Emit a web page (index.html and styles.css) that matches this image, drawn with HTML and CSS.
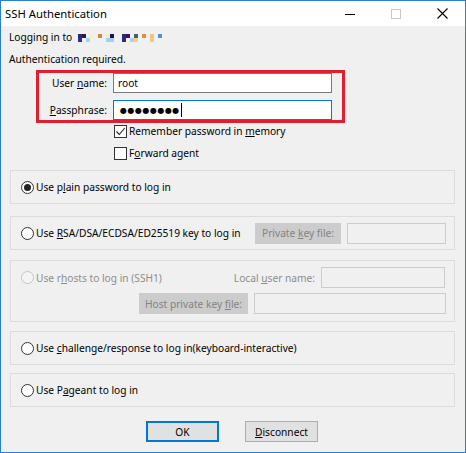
FILE: index.html
```html
<!DOCTYPE html>
<html>
<head>
<meta charset="utf-8">
<link rel="stylesheet" href="styles.css">
</head>
<body>
<div class="window">
  <div class="titlebar">
    <span class="title">SSH Authentication</span>
    <div class="caption">
      <span class="cap"><svg width="10" height="10" viewBox="0 0 10 10"><line x1="0" y1="5.5" x2="10" y2="5.5" stroke="#000" stroke-width="1"/></svg></span>
      <span class="cap"><svg width="10" height="10" viewBox="0 0 10 10"><rect x="0.5" y="0.5" width="9" height="9" fill="none" stroke="#c8c8c8" stroke-width="1"/></svg></span>
      <span class="cap"><svg width="11" height="11" viewBox="0 0 11 11"><path d="M0.5 0.5 L10.5 10.5 M10.5 0.5 L0.5 10.5" stroke="#000" stroke-width="1.1" fill="none"/></svg></span>
    </div>
  </div>
  <div class="content">
    <div class="line"><span>Logging in to</span>
      <svg class="host" width="84" height="8" viewBox="0 0 84 8" shape-rendering="crispEdges">
        <rect x="0" y="0" width="4" height="4" fill="#2b2b6f"/>
        <rect x="4" y="0" width="4" height="4" fill="#3a1150"/>
        <rect x="12" y="0" width="4" height="4" fill="#f4efcf"/>
        <rect x="20" y="0" width="4" height="4" fill="#d38a3b"/>
        <rect x="28" y="0" width="4" height="4" fill="#f2ecc8"/>
        <rect x="32" y="0" width="4" height="4" fill="#1b1452"/>
        <rect x="44" y="0" width="4" height="4" fill="#2c2a78"/>
        <rect x="48" y="0" width="4" height="4" fill="#3d1361"/>
        <rect x="56" y="0" width="4" height="4" fill="#3f6272"/>
        <rect x="64" y="0" width="4" height="4" fill="#d6903f"/>
        <rect x="72" y="0" width="4" height="4" fill="#f2c27f"/>
        <rect x="80" y="0" width="4" height="4" fill="#4a92df"/>
        <rect x="0" y="4" width="4" height="4" fill="#30308e"/>
        <rect x="8" y="4" width="4" height="4" fill="#a6d3f2"/>
        <rect x="28" y="4" width="8" height="4" fill="#9fd2f0"/>
        <rect x="44" y="4" width="4" height="4" fill="#2b2b78"/>
        <rect x="52" y="4" width="4" height="4" fill="#a8d2ef"/>
        <rect x="56" y="4" width="4" height="4" fill="#efd08f"/>
        <rect x="72" y="4" width="4" height="4" fill="#f2c985"/>
      </svg>
    </div>
    <div class="line auth"><span>Authentication required.</span></div>
    <div class="creds">
      <div class="field">
        <span class="lbl">User <u>n</u>ame:</span>
        <div class="input"><span>root</span></div>
      </div>
      <div class="field">
        <span class="lbl"><u>P</u>assphrase:</span>
        <div class="input focus"><span class="dots">●●●●●●●●</span><span class="caret"></span></div>
      </div>
    </div>
    <div class="checks">
      <div class="check"><span class="box"><svg width="11" height="11" viewBox="0 0 11 11"><path d="M1.5 5.5 L4.3 8.5 L9.8 2" stroke="#222" stroke-width="1.1" fill="none"/></svg></span><span>Remember password in <u>m</u>emory</span></div>
      <div class="check"><span class="box"></span><span>F<u>o</u>rward agent</span></div>
    </div>

    <div class="group g1">
      <div class="radio"><span class="dot on"></span><span>Use p<u>l</u>ain password to log in</span></div>
    </div>

    <div class="group g2">
      <div class="radio grow"><span class="dot"></span><span>Use <u>R</u>SA/DSA/ECDSA/ED25519 key to log in</span></div>
      <span class="dbtn keybtn"><span>Private <u>k</u>ey file:</span></span>
      <span class="dinput keyin"></span>
    </div>

    <div class="group g3">
      <div class="g3row">
        <div class="radio grow disabled"><span class="dot off"></span><span>Use r<u>h</u>osts to log in (SSH1)</span></div>
        <span class="dlabel">Local <u>u</u>ser name:</span>
        <span class="dinput localin"></span>
      </div>
      <div class="g3row right">
        <span class="dbtn hostbtn"><span>Host private key <u>f</u>ile:</span></span>
        <span class="dinput hostin"></span>
      </div>
    </div>

    <div class="group g4">
      <div class="radio"><span class="dot"></span><span>Use <u>c</u>hallenge/response to log in(keyboard-interactive)</span></div>
    </div>

    <div class="group g5">
      <div class="radio"><span class="dot"></span><span>Use P<u>a</u>geant to log in</span></div>
    </div>

    <div class="buttons">
      <span class="btn ok"><span>OK</span></span>
      <span class="btn"><span><u>D</u>isconnect</span></span>
    </div>
  </div>
</div>
</body>
</html>
```
FILE: styles.css
```css
* { box-sizing: border-box; }
html, body { margin: 0; padding: 0; background: #ffffff; }
body {
  font-family: "Noto Sans", "Open Sans", sans-serif;
  font-size: 10.2px;
  color: #000;
}
u { text-decoration: underline; text-underline-offset: 1px; }

.window {
  width: 466px;
  height: 453px;
  border: 1px solid #2a7fd4;
  background: #f0f0f0;
  display: flex;
  flex-direction: column;
}
.titlebar {
  height: 25px;
  background: #fff;
  display: flex;
  align-items: center;
  padding-left: 4px;
  flex: none;
}
.title { flex: 1; font-size: 11.3px; }
.caption { display: flex; height: 25px; }
.cap {
  width: 46px;
  height: 25px;
  display: flex;
  align-items: center;
  justify-content: center;
}

.content { padding: 3px 0 0 8px; }
.line {
  height: 16px;
  line-height: 16px;
  display: flex;
  align-items: center;
  white-space: nowrap;
}
.host { margin-left: 6px; margin-top: 1px; }
.auth { margin-top: 6px; }

.creds {
  margin-top: 3px;
  margin-left: 27px;
  width: 309px;
  border: 3px solid #df1f2d;
  padding-right: 10px;
  display: flex;
  flex-direction: column;
  gap: 7px;
}
.field { display: flex; align-items: center; gap: 6px; height: 20px; }
.lbl { width: 68px; text-align: right; white-space: nowrap; }
.input {
  width: 219px;
  height: 20px;
  background: #fff;
  border: 1px solid #7a7a7a;
  padding-left: 4px;
  display: flex;
  align-items: center;
}
.input.focus { border-color: #0078d7; padding-left: 6px; }
.dots {
  font-family: "DejaVu Sans", sans-serif;
  font-size: 8px;
  letter-spacing: 0.5px;
}
.caret { width: 1px; height: 14px; background: #000; margin-left: 1px; }

.checks {
  margin-left: 105px;
  display: flex;
  flex-direction: column;
  gap: 6px;
}
.check {
  height: 16px;
  display: flex;
  align-items: center;
  white-space: nowrap;
}
.box {
  width: 13px;
  height: 13px;
  border: 1px solid #333;
  background: #fff;
  margin-right: 2px;
  display: flex;
  align-items: center;
  justify-content: center;
}

.group {
  margin-left: 1px;
  width: 445px;
  border: 1px solid #dcdcdc;
  display: flex;
  align-items: center;
  padding: 0 8px 0 10px;
}
.g1 { margin-top: 9px; height: 34px; }
.g2 { margin-top: 12px; height: 34px; }
.g3 {
  margin-top: 10px;
  height: 62px;
  flex-direction: column;
  align-items: stretch;
  justify-content: flex-start;
  padding-top: 6px;
  gap: 5px;
}
.g4 { margin-top: 9px; height: 34px; }
.g5 { margin-top: 8px; height: 34px; }

.radio {
  display: flex;
  align-items: center;
  white-space: nowrap;
}
.grow { flex: 1; }
.disabled { color: #8d8d8d; }
.dot {
  width: 13px;
  height: 13px;
  border: 1px solid #333;
  border-radius: 50%;
  background: #fff;
  margin-right: 2px;
  position: relative;
  flex: none;
}
.dot.on::after {
  content: "";
  position: absolute;
  left: 2px;
  top: 2px;
  width: 7px;
  height: 7px;
  border-radius: 50%;
  background: #222;
}
.dot.off { border-color: #c4c4c4; background: #f4f4f4; }

.dbtn {
  background: #cccccc;
  color: #838383;
  height: 21px;
  display: flex;
  align-items: center;
  justify-content: center;
  white-space: nowrap;
}
.dinput {
  height: 21px;
  border: 1px solid #cccccc;
  background: #f0f0f0;
  display: block;
}
.keybtn { width: 86px; }
.keyin { width: 99px; margin-left: 6px; }

.g3row { display: flex; align-items: center; height: 21px; }
.g3row.right { justify-content: flex-end; }
.dlabel { color: #8d8d8d; margin-right: 6px; white-space: nowrap; }
.localin { width: 124px; margin-right: 1px; }
.hostbtn { width: 109px; }
.hostin { width: 192px; margin-left: 6px; }

.buttons {
  margin-top: 14px;
  margin-left: 137px;
  display: flex;
  gap: 26px;
}
.btn {
  width: 73px;
  height: 21px;
  background: #e1e1e1;
  border: 1px solid #adadad;
  display: flex;
  align-items: center;
  justify-content: center;
  white-space: nowrap;
}
.btn.ok { border: 2px solid #0078d7; }
```
